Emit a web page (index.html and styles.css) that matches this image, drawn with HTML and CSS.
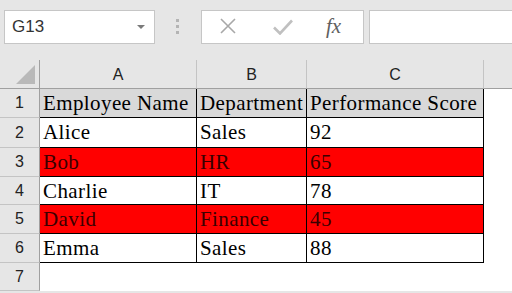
FILE: index.html
```html
<!DOCTYPE html>
<html>
<head>
  <meta charset="utf-8">
  <link rel="stylesheet" href="styles.css">
</head>
<body>
<div class="app">
  <!-- name box + formula bar -->
  <div class="topbar">
    <div class="namebox">
      <span class="cellref">G13</span>
      <span class="caret"></span>
    </div>
    <div class="grip"><i></i><i></i><i></i></div>
    <div class="fxbox">
      <svg class="icon-cancel" width="16" height="16" viewBox="0 0 16 16"><path d="M1 1 L15 15 M15 1 L1 15" stroke="#a8a8a8" stroke-width="1.6" fill="none"/></svg>
      <svg class="icon-enter" width="20" height="16" viewBox="0 0 20 16"><path d="M1 8.5 L7 14.5 L19 1.5" stroke="#c0c0c0" stroke-width="2.6" fill="none"/></svg>
      <span class="fx">fx</span>
    </div>
    <div class="formula"></div>
  </div>

  <!-- the sheet -->
  <div class="sheet">
    <div class="corner"><svg width="19" height="19" viewBox="0 0 19 19"><polygon points="19,0 19,19 0,19" fill="#b9b9b9"/></svg></div>
    <div class="colhead">A</div>
    <div class="colhead">B</div>
    <div class="colhead">C</div>
    <div class="colhead last"></div>

    <div class="rowhead">1</div>
    <div class="cell head">Employee Name</div>
    <div class="cell head">Department</div>
    <div class="cell head">Performance Score</div>
    <div class="blank"></div>

    <div class="rowhead">2</div>
    <div class="cell">Alice</div>
    <div class="cell">Sales</div>
    <div class="cell">92</div>
    <div class="blank"></div>

    <div class="rowhead">3</div>
    <div class="cell low">Bob</div>
    <div class="cell low">HR</div>
    <div class="cell low">65</div>
    <div class="blank"></div>

    <div class="rowhead">4</div>
    <div class="cell">Charlie</div>
    <div class="cell">IT</div>
    <div class="cell">78</div>
    <div class="blank"></div>

    <div class="rowhead">5</div>
    <div class="cell low">David</div>
    <div class="cell low">Finance</div>
    <div class="cell low">45</div>
    <div class="blank"></div>

    <div class="rowhead">6</div>
    <div class="cell">Emma</div>
    <div class="cell">Sales</div>
    <div class="cell">88</div>
    <div class="blank"></div>

    <div class="rowhead">7</div>
    <div class="blank"></div>
    <div class="blank"></div>
    <div class="blank"></div>
    <div class="blank"></div>
  </div>
</div>
</body>
</html>
```

FILE: styles.css
```css
*{
  box-sizing: border-box;
  margin: 0;
  padding: 0;
}

body{
  width: 512px;
  height: 293px;
  overflow: hidden;
  background: #e6e6e6;
  font-family: "Liberation Sans", Arial, sans-serif;
}

.app{
  display: flex;
  flex-direction: column;
}

/* Top strip: name box, grip, buttons, formula input */
.topbar{
  display: flex;
  align-items: flex-start;
  height: 60px;
  padding: 10px 0 0 4px;
}

.namebox{
  width: 151px;
  height: 34px;
  background: #fff;
  border: 1px solid #c6c6c6;
  display: flex;
  align-items: center;
  padding: 0 9px 0 7px;
}
.cellref{
  flex: 1;
  font-size: 17px;
  color: #333;
}
.caret{
  width: 0;
  height: 0;
  border-left: 4px solid transparent;
  border-right: 4px solid transparent;
  border-top: 4px solid #7a7a7a;
}

.grip{
  width: 4px;
  margin: 9px 21px 0 21px;
  display: flex;
  flex-direction: column;
  gap: 3px;
}
.grip i{
  display: block;
  width: 3px;
  height: 3px;
  background: #b4b4b4;
}

.fxbox{
  width: 163px;
  height: 34px;
  background: #fff;
  border: 1px solid #c6c6c6;
  display: flex;
  align-items: center;
  padding-left: 18px;
}
.icon-cancel{
  margin-top: -2px;
}
.icon-enter{
  margin: -1px 0 0 37px;
}
.fx{
  margin-left: 33px;
  font-family: "Liberation Serif", "Times New Roman", serif;
  font-style: italic;
  font-size: 21px;
  color: #606060;
  margin-top: -1px;
}

.formula{
  flex: 1;
  height: 34px;
  margin: 0 -2px 0 5px;
  background: #fff;
  border: 1px solid #c6c6c6;
}

/* Grid */
.sheet{
  display: grid;
  grid-template-columns: 40px 157px 110px 177px 1fr;
  grid-template-rows: 29px 29px 30px 29px 28px 29px 29px 28px;
}

.corner{
  border-right: 1px solid #a0a0a0;
  border-bottom: 1px solid #a0a0a0;
  display: flex;
  align-items: flex-end;
  justify-content: flex-end;
  padding: 0 4px 4px 0;
}

.colhead{
  border-right: 1px solid #c4c4c4;
  border-bottom: 1px solid #a0a0a0;
  display: flex;
  align-items: center;
  justify-content: center;
  font-size: 16px;
  color: #222;
  padding-top: 1px;
}
.colhead.last{
  border-right: none;
}

.rowhead{
  border-right: 1px solid #a0a0a0;
  border-bottom: 1px solid #c4c4c4;
  display: flex;
  align-items: center;
  justify-content: center;
  font-size: 16px;
  color: #222;
}

.cell{
  background: #fff;
  border-right: 1px solid #000;
  border-bottom: 1px solid #000;
  font-family: "Liberation Serif", "Times New Roman", serif;
  font-size: 21px;
  letter-spacing: 0.4px;
  line-height: 28px;
  padding-left: 3px;
  white-space: nowrap;
  color: #000;
}
.cell.head{
  background: #d9d9d9;
}
.cell.low{
  background: #ff0000;
  color: #3a0000;
}

.blank{
  background: #fff;
}
```
